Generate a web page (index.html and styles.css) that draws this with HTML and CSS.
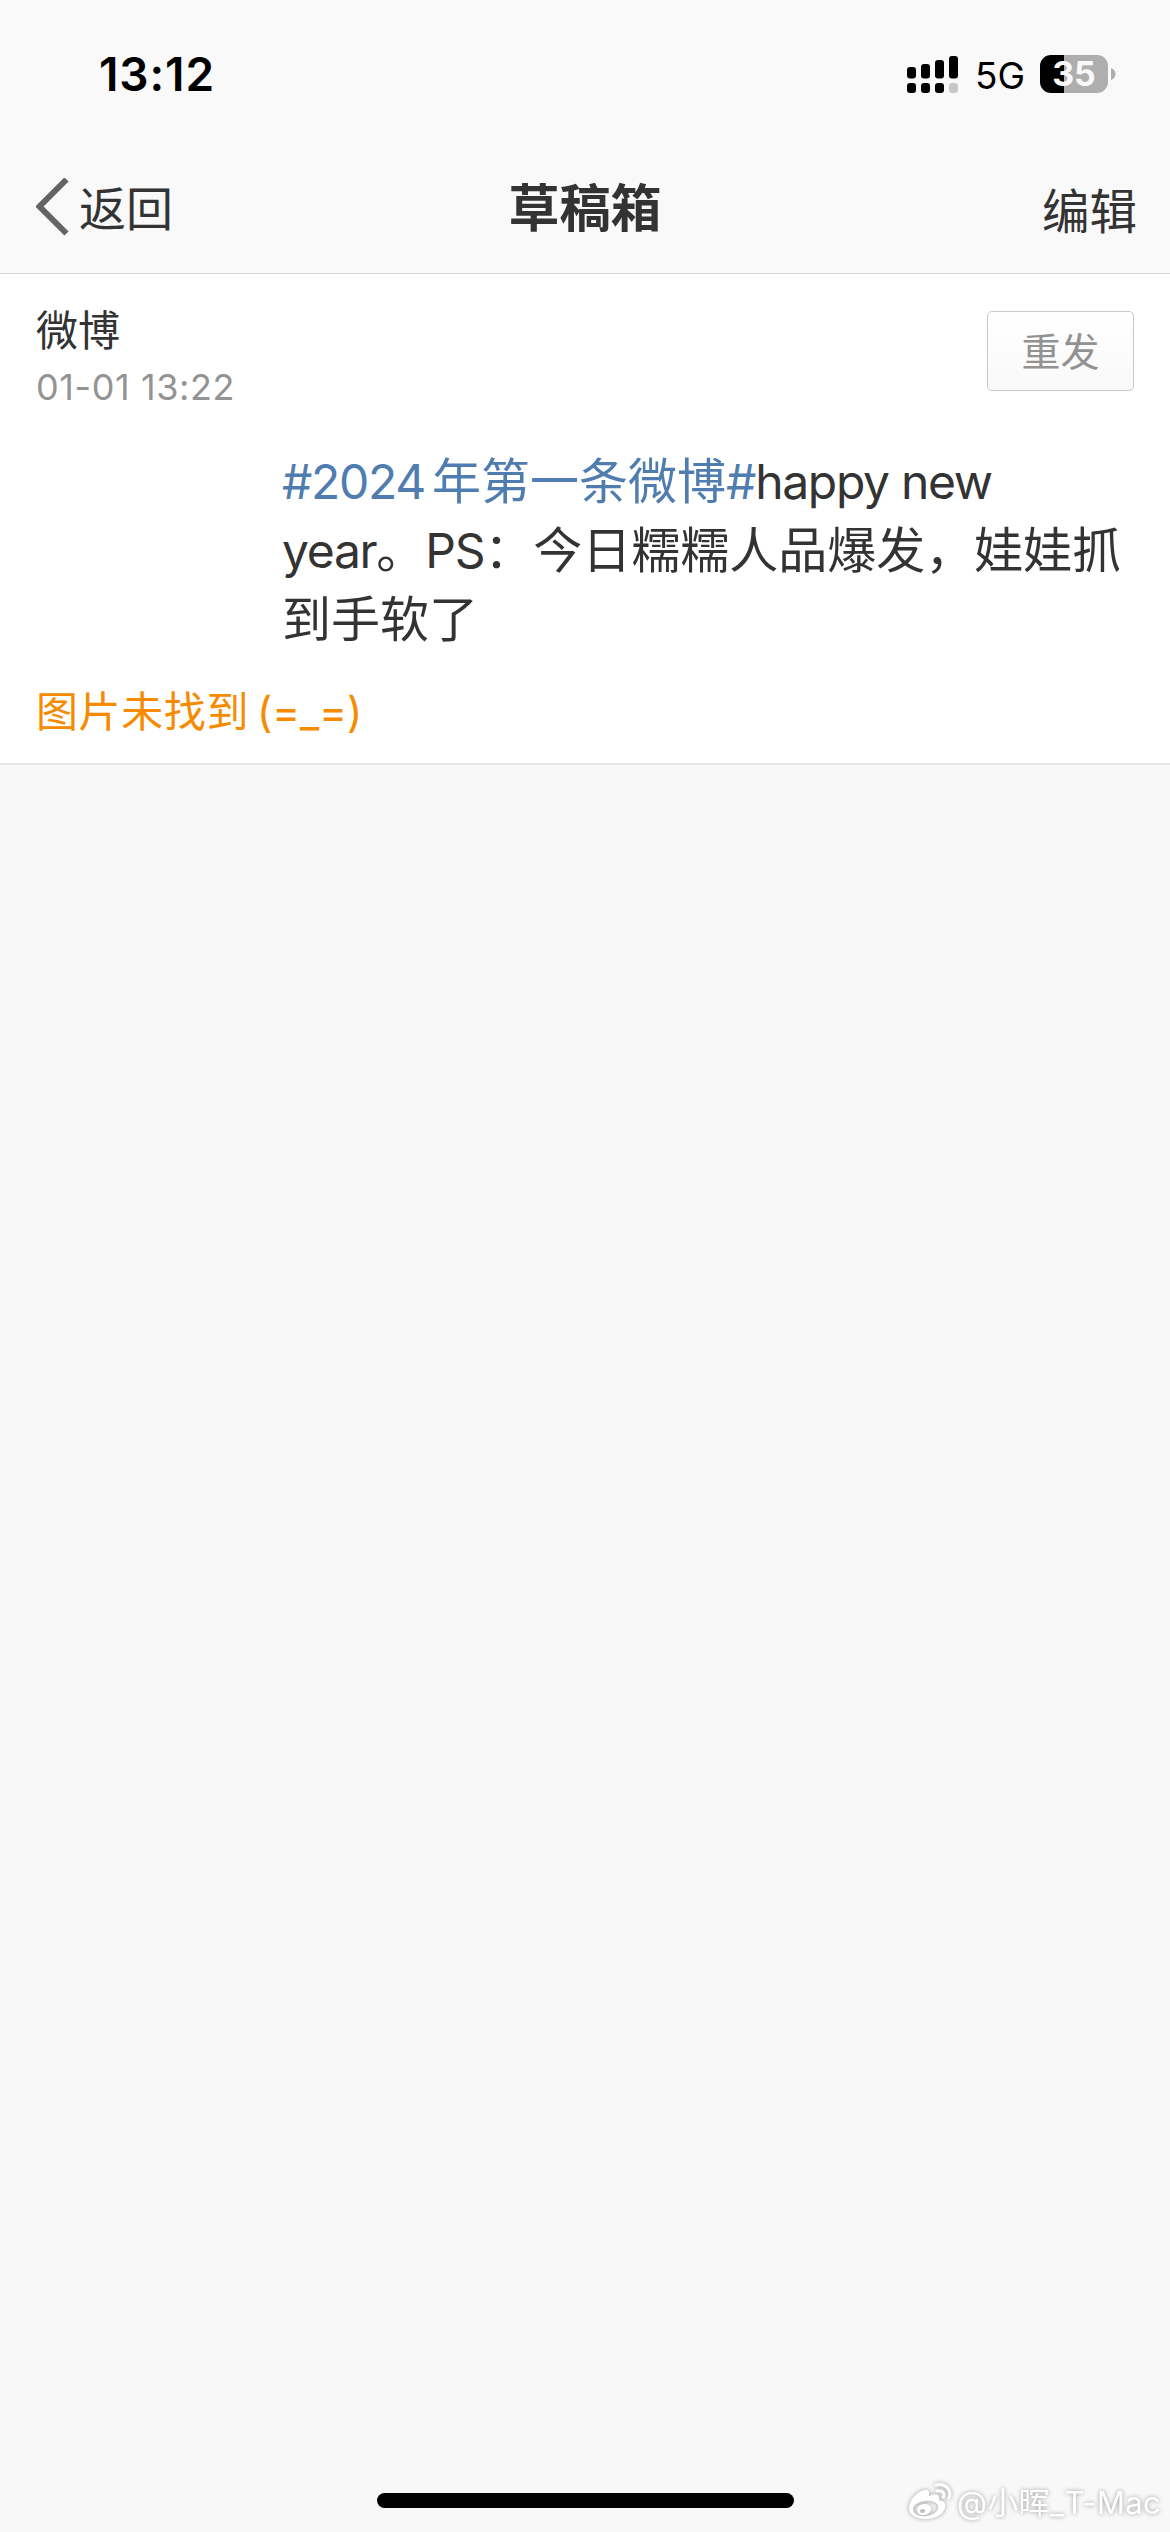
FILE: index.html
```html
<!DOCTYPE html>
<html lang="zh-CN">
<head>
<meta charset="utf-8">
<title>草稿箱</title>
<link rel="stylesheet" href="styles.css">
</head>
<body>
<header class="top">
  <div class="status">
    <span class="clock">13:12</span>
    <div class="indicators">
      <svg class="signal" width="52" height="38" viewBox="0 0 52 38">
        <rect x="0" y="11" width="9" height="11.5" rx="3"/>
        <rect x="14" y="8" width="9" height="14.5" rx="3"/>
        <rect x="28" y="4" width="9" height="18.5" rx="3"/>
        <rect x="42" y="0" width="9" height="22.5" rx="3"/>
        <rect x="0" y="27" width="9" height="10" rx="3"/>
        <rect x="14" y="27" width="9" height="10" rx="3"/>
        <rect x="28" y="27" width="9" height="10" rx="3"/>
        <rect x="42" y="27" width="9" height="10" rx="3" fill="#c8c8c8"/>
      </svg>
      <span class="network">5G</span>
      <div class="battery"><span class="level">35</span></div>
      <svg class="cap" width="5" height="12" viewBox="0 0 5 12"><path d="M0 0Q4.5 2 4.5 6T0 12Z" fill="#aeaeae"/></svg>
    </div>
  </div>
  <nav class="nav">
    <a class="back">
      <svg width="34" height="60" viewBox="0 0 34 60"><path d="M26.500 1.500L-0.500 28.500L26.500 55.500" transform="translate(4)" fill="none" stroke="#646464" stroke-width="6"/></svg>
      <span>返回</span>
    </a>
    <h1 class="title">草稿箱</h1>
    <a class="edit">编辑</a>
  </nav>
</header>
<main class="draft">
  <div class="meta">
    <div>
      <div class="kind">微博</div>
      <div class="time">01-01 13:22</div>
    </div>
    <button class="resend">重发</button>
  </div>
  <p class="body">
    <span class="line"><span class="topic"><span class="latin num">#2024</span>年第一条微博<span class="latin">#</span></span><span class="latin">happy new</span></span>
    <span class="line"><span class="latin">year</span>。<span class="latin">PS</span>：今日糯糯人品爆发，娃娃抓</span>
    <span class="line">到手软了</span>
  </p>
  <p class="error">图片未找到<span class="face">(=_=)</span></p>
</main>
<footer class="bottom">
  <div class="home"></div>
  <div class="mark">
    <svg width="46" height="40" viewBox="0 0 46 40">
      <path fill="#fff" fill-rule="evenodd" d="M1 25C1 17 9 9 16 7C20 6 22 8 21 13C27 10 32 11 31 17C36 18 38 20 37 25C35 32 27 36 18 36C8 36 1 32 1 25ZM5 26C5 31 11 34 18 33C26 32 31 28 30 23C29 19 23 17 17 18C10 19 5 22 5 26ZM9 27C9 23 13 21 17 21C21 21 24 23 23 27C22 30 19 32 15 32C11 32 9 30 9 27ZM12 28A2.500 2 0 1 0 17 28A2.500 2 0 1 0 12 28Z"/>
      <path d="M28 2C38 0 44 7 41 15M29 8C34 7 37 10 35.500 14" fill="none" stroke="#fff" stroke-width="3" stroke-linecap="round"/>
    </svg>
    <span>@小晖_T-Mac</span>
  </div>
</footer>
</body>
</html>
```
FILE: styles.css
```css
* { box-sizing: border-box; }
body {
  margin: 0;
  height: 2532px;
  display: flex;
  flex-direction: column;
  background: #f8f8f8;
  color: #333;
  font-family: Inter, "Noto Sans CJK SC", sans-serif;
}
.top { height: 274px; background: #f9f9f9; border-bottom: 1px solid #d8d8d8; }
.status { height: 150px; padding: 0 54px 0 99px; display: flex; justify-content: space-between; color: #000; }
.clock { font-size: 46px; font-weight: 600; line-height: 56px; padding-top: 46px; letter-spacing: 0.9px; }
.indicators { display: flex; align-items: flex-start; padding-top: 55px; }
.signal { margin: 1px 16px 0 0; }
.network { width: 65px; font-size: 37px; font-weight: 400; line-height: 42px; white-space: nowrap; }
.battery { width: 68px; height: 38px; border-radius: 11px; background: linear-gradient(90deg, #000 24px, #aeaeae 24px); text-align: center; }
.level { display: block; color: #f9f9f9; font-size: 34px; font-weight: 700; line-height: 38px; }
.cap { margin: 13px 0 0 3px; }
.nav { height: 123px; padding: 0 33px 0 36px; display: grid; grid-template-columns: 1fr auto 1fr; align-items: start; }
.back { display: flex; align-items: center; gap: 9px; font-size: 47px; line-height: 60px; padding-top: 27px; }
.back span { padding-top: 2px; }
.title { margin: 0; padding: 29px 3px 0 0; font-size: 51px; font-weight: 700; line-height: 60px; }
.edit { justify-self: end; font-size: 47.5px; line-height: 60px; padding-top: 32px; }
.draft { height: 491px; padding: 36px 36px 0 36px; background: #fff; border-bottom: 2px solid #e5e5e5; }
.meta { display: flex; justify-content: space-between; height: 100px; }
.kind { font-size: 42px; line-height: 42px; }
.time { font-size: 36px; line-height: 40px; margin-top: 15px; color: #939393; letter-spacing: 0.6px; }
.resend { width: 147px; height: 80px; margin-top: 1px; padding: 0 0 5px; border: 1px solid #c8c8c8; border-radius: 5px; background: linear-gradient(#fff, #f9f9f9); color: #929292; font: inherit; font-size: 39px; }
.body { margin: 37px 0 0 246px; font-size: 49px; line-height: 69px; white-space: nowrap; }
.line { display: block; height: 69px; }
.latin { font-size: 48px; line-height: 1; letter-spacing: -1.3px; }
.topic { color: #507daf; }
.num { margin-right: 7px; }
.error { margin: 28px 0 0; font-size: 42px; line-height: 60px; letter-spacing: 0.6px; color: #f68b00; }
.face { margin-left: 8px; letter-spacing: 0; }
.bottom { flex: 1; display: grid; grid-template-columns: 377px 417px 1fr; align-items: end; }
.home { grid-column: 2; height: 15px; margin-bottom: 24px; border-radius: 8px; background: #000; }
.mark { grid-column: 3; display: flex; justify-content: flex-end; align-items: center; gap: 3px; padding: 0 9px 7px 0; color: #fff; font-size: 31px; line-height: 44px; letter-spacing: 0.3px; white-space: nowrap; filter: drop-shadow(0 0 2px #999); }
```
